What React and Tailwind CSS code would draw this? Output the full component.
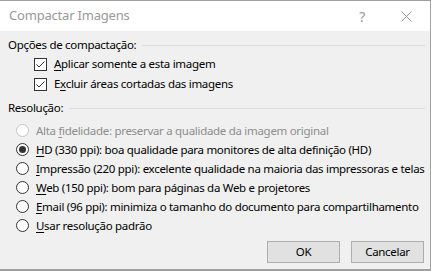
import { useState } from 'react';

function CheckBox({ checked }) {
  return (
    <span className="w-[13px] h-[13px] border border-[#333] bg-white flex items-center justify-center shrink-0">
      {checked && (
        <svg width="11" height="11" viewBox="0 0 11 11">
          <polyline points="1.5,5.5 4,8 9.5,2.5" fill="none" stroke="#333" strokeWidth="1" />
        </svg>
      )}
    </span>
  );
}

function Radio({ checked, disabled }) {
  return (
    <span
      className={`w-[13px] h-[13px] rounded-full border bg-white flex items-center justify-center shrink-0 ${
        disabled ? 'border-[#c4c4c4]' : 'border-[#333]'
      }`}
    >
      {checked && <span className="w-[7px] h-[7px] rounded-full bg-[#333]" />}
    </span>
  );
}

function Label({ pre, key1, post }) {
  return (
    <span className="whitespace-nowrap">
      {pre}
      <span className="underline underline-offset-2">{key1}</span>
      {post}
    </span>
  );
}

const resolutions = [
  { pre: 'Alta ', key1: 'f', post: 'idelidade: preservar a qualidade da imagem original', disabled: true },
  { pre: '', key1: 'H', post: 'D (330 ppi): boa qualidade para monitores de alta definição (HD)' },
  { pre: '', key1: 'I', post: 'mpressão (220 ppi): excelente qualidade na maioria das impressoras e telas' },
  { pre: '', key1: 'W', post: 'eb (150 ppi): bom para páginas da Web e projetores' },
  { pre: '', key1: 'E', post: 'mail (96 ppi): minimiza o tamanho do documento para compartilhamento' },
  { pre: '', key1: 'U', post: 'sar resolução padrão' },
];

export default function App() {
  const [selected, setSelected] = useState(1);

  return (
    <div
      className="w-[431px] h-[271px] flex flex-col border-t border-r border-b-2 border-[#a0a0a0] bg-[#f0f0f0] text-[11.5px] tracking-[-0.3px] text-black overflow-hidden"
      style={{ fontFamily: '"Noto Sans", sans-serif' }}
    >
      {/* title bar */}
      <div className="h-[30px] bg-white flex items-center shrink-0">
        <span className="ml-[9px] text-[13px] tracking-[-0.2px] text-[#999]">Compactar Imagens</span>
        <span className="ml-auto mr-[36px] text-[14px] text-[#999]">?</span>
        <svg width="11" height="11" viewBox="0 0 11 11" className="mr-[18px]">
          <path d="M0.5 0.5 L10.5 10.5 M10.5 0.5 L0.5 10.5" stroke="#999" strokeWidth="1" />
        </svg>
      </div>

      <div className="flex flex-col pt-[6px]">
        <div className="h-[16px] flex items-center pl-[8px] pr-[5px]">
          <span className="whitespace-nowrap">Opções de compactação:</span>
          <span className="flex-1 h-px bg-[#dcdcdc] ml-[6px]" />
        </div>

        <div className="flex flex-col pl-[34px] pt-[1px]">
          <div className="h-[20px] flex items-center gap-[7px]">
            <CheckBox checked />
            <Label pre="" key1="A" post="plicar somente a esta imagem" />
          </div>
          <div className="h-[20px] flex items-center gap-[7px]">
            <CheckBox checked />
            <Label pre="E" key1="x" post="cluir áreas cortadas das imagens" />
          </div>
        </div>

        <div className="h-[16px] flex items-center pl-[8px] pr-[5px] mt-[6px]">
          <span className="whitespace-nowrap">Resolução:</span>
          <span className="flex-1 h-px bg-[#dcdcdc] ml-[6px]" />
        </div>

        <div className="flex flex-col pl-[16px] pt-[5px]">
          {resolutions.map((r, i) => (
            <div
              key={i}
              className={`h-[19px] flex items-center gap-[7px] ${r.disabled ? 'text-[#8d8d8d]' : ''}`}
              onClick={() => !r.disabled && setSelected(i)}
            >
              <Radio checked={selected === i} disabled={r.disabled} />
              <Label pre={r.pre} key1={r.key1} post={r.post} />
            </div>
          ))}
        </div>

        <div className="flex justify-end gap-[11px] pr-[6px] mt-[6px]">
          <button className="w-[73px] h-[22px] bg-[#e1e1e1] border border-[#adadad] flex items-center justify-center">
            OK
          </button>
          <button className="w-[73px] h-[22px] bg-[#e1e1e1] border border-[#adadad] flex items-center justify-center">
            Cancelar
          </button>
        </div>
      </div>
    </div>
  );
}
